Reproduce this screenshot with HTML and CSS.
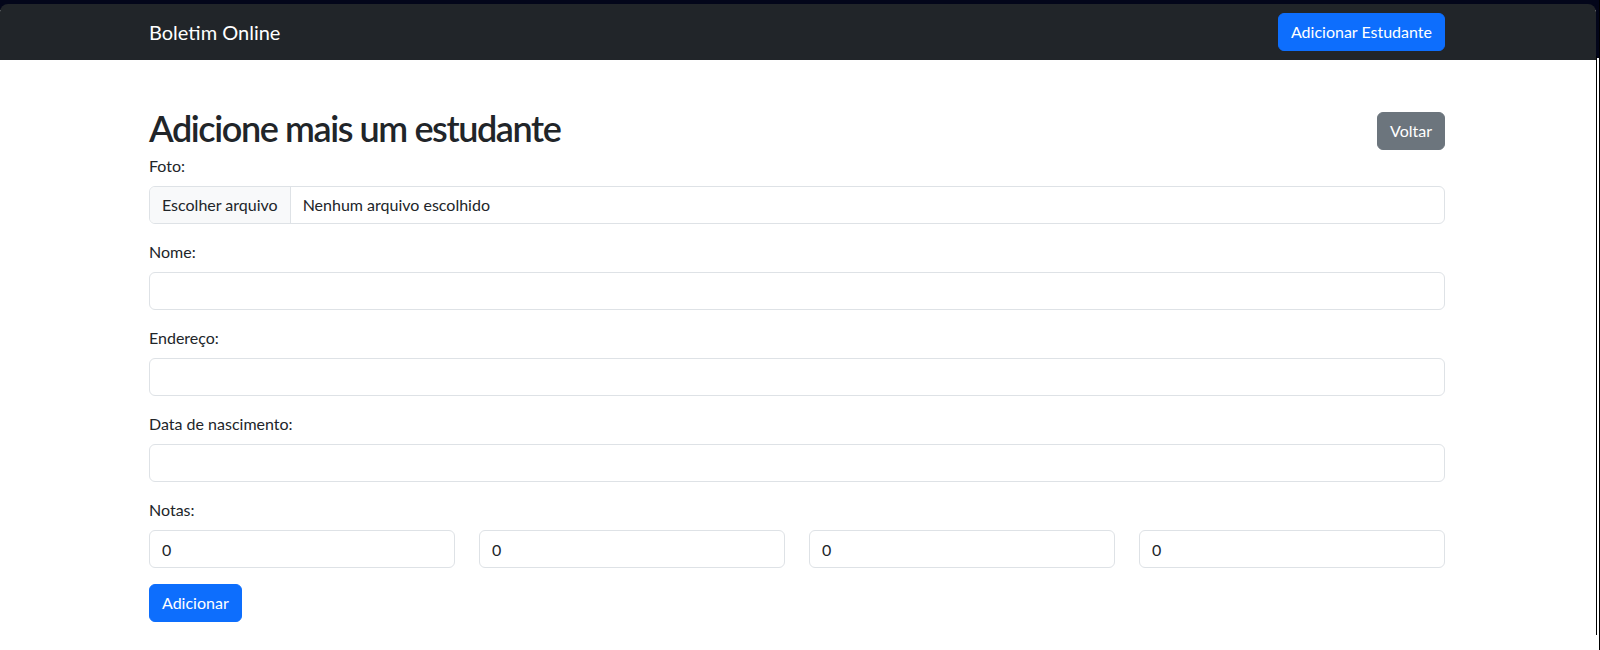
FILE: index.html
```html
<!DOCTYPE html>
<html lang="pt-BR">
<head>
<meta charset="utf-8">
<title>Boletim Online</title>
<link rel="stylesheet" href="styles.css">
</head>
<body>
<div class="screen">
  <div class="window">
    <nav class="navbar">
      <div class="container nav-inner">
        <a class="brand" href="#">Boletim Online</a>
        <button class="btn btn-primary" type="button">Adicionar Estudante</button>
      </div>
    </nav>
    <main class="container main">
      <div class="title-row">
        <h1 class="title">Adicione mais um estudante</h1>
        <button class="btn btn-secondary" type="button">Voltar</button>
      </div>
      <form class="form">
        <div class="group">
          <label class="label">Foto:</label>
          <div class="file-input">
            <span class="file-btn">Escolher arquivo</span>
            <span class="file-name">Nenhum arquivo escolhido</span>
          </div>
        </div>
        <div class="group">
          <label class="label" for="nome">Nome:</label>
          <input class="form-control" id="nome" type="text">
        </div>
        <div class="group">
          <label class="label" for="endereco">Endereço:</label>
          <input class="form-control" id="endereco" type="text">
        </div>
        <div class="group">
          <label class="label" for="nasc">Data de nascimento:</label>
          <input class="form-control" id="nasc" type="text">
        </div>
        <div class="group">
          <label class="label">Notas:</label>
          <div class="notas">
            <input class="form-control" type="text" value="0">
            <input class="form-control" type="text" value="0">
            <input class="form-control" type="text" value="0">
            <input class="form-control" type="text" value="0">
          </div>
        </div>
        <button class="btn btn-primary" type="button">Adicionar</button>
      </form>
    </main>
  </div>
  <div class="edge"><div class="edge-line"></div></div>
</div>
</body>
</html>
```
FILE: styles.css
```css
* { box-sizing: border-box; }
html, body { margin: 0; padding: 0; }
body {
  background: #ffffff;
  color: #212529;
  font-family: "Lato", "Liberation Sans", sans-serif;
  font-size: 16px;
  line-height: 1.5;
  width: 1600px;
  height: 650px;
  overflow: hidden;
}
.screen {
  display: flex;
  height: 650px;
  background: #ffffff;
}
.window {
  width: 1596px;
  background: linear-gradient(to bottom, #03061a 0, #03061a 10px, #ffffff 10px);
  padding-top: 4px;
}
.edge {
  width: 4px;
  background: linear-gradient(to bottom, #03061a 0, #03061a 58px, #ffffff 58px);
  border-right: 1px solid #000;
}
.edge-line {
  margin-top: 56px;
  width: 1px;
  height: 579px;
  background: #000;
}
.container {
  width: 1296px;
  margin-left: 149px;
}
.navbar {
  height: 56px;
  background: #212529;
  border-radius: 8px 8px 0 0;
  display: flex;
  align-items: center;
}
.nav-inner {
  display: flex;
  align-items: center;
  justify-content: space-between;
}
.brand {
  color: #ffffff;
  text-decoration: none;
  font-size: 20px;
  line-height: 30px;
  padding: 5px 0;
}
.btn {
  display: inline-block;
  font-family: inherit;
  font-size: 16px;
  line-height: 24px;
  padding: 6px 12px;
  border: 1px solid transparent;
  border-radius: 6px;
  color: #ffffff;
  cursor: pointer;
}
.btn-primary { background: #0d6efd; border-color: #0d6efd; }
.btn-secondary { background: #6c757d; border-color: #6c757d; }
.main {
  padding-top: 47px;
}
.title-row {
  display: flex;
  justify-content: space-between;
  align-items: flex-end;
  margin-bottom: 4px;
}
.title {
  margin: 0;
  font-size: 36px;
  font-weight: 600;
  line-height: 43px;
  letter-spacing: -1.4px;
}
.group { margin-bottom: 16px; }
.label {
  display: block;
  margin-bottom: 8px;
}
.form-control {
  display: block;
  width: 100%;
  height: 38px;
  padding: 6px 12px;
  font-family: inherit;
  font-size: 16px;
  line-height: 24px;
  color: #212529;
  background: #ffffff;
  border: 1px solid #dee2e6;
  border-radius: 6px;
  outline: none;
}
.file-input {
  display: flex;
  height: 38px;
  border: 1px solid #dee2e6;
  border-radius: 6px;
  overflow: hidden;
}
.file-btn {
  padding: 6px 12px;
  background: #f8f9fa;
  border-right: 1px solid #dee2e6;
}
.file-name {
  padding: 6px 12px;
}
.notas {
  display: grid;
  grid-template-columns: repeat(4, 1fr);
  column-gap: 24px;
}
```
